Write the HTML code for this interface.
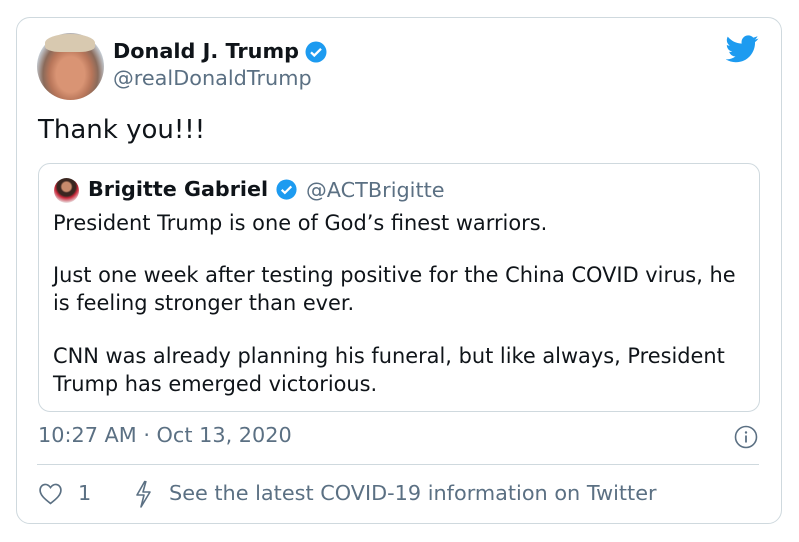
<!DOCTYPE html>
<html><head><meta charset="utf-8"><style>
html,body{margin:0;padding:0;background:#fff;width:799px;height:542px;overflow:hidden}
body{font-family:"DejaVu Sans","Liberation Sans",sans-serif;position:relative}
.a{position:absolute;white-space:nowrap;line-height:1}
.card{position:absolute;left:16px;top:17px;width:764px;height:505px;border:1px solid #cfd9de;border-radius:14px}
.q{position:absolute;left:38px;top:163px;width:720px;height:247px;border:1px solid #cfd9de;border-radius:12px}
.t{font-size:20.9px;color:#0f1419}
.g{color:#5b7083}
</style></head><body>
<div class="card"></div>
<div class="a" style="left:37px;top:33px;width:67px;height:67px;border-radius:50%;background:radial-gradient(ellipse at 50% 62%,#d99474 0 30%,#b8765a 45%,#8a6a5a 58%,#c9d3dc 75%,#e6edf3 100%)"></div>
<div class="a" style="left:45px;top:34px;width:50px;height:18px;border-radius:50% 50% 30% 30%;background:#d8c9b0"></div>
<div class="a" style="left:113px;top:41px;font-size:20.8px;font-weight:bold;color:#0f1419">Donald J. Trump</div>
<svg class="a" style="left:304px;top:40px" width="24" height="24" viewBox="0 0 24 24"><circle cx="12" cy="12" r="10.5" fill="#1d9bf0"/><path d="M7 12.3l3.3 3.2L17 8.8" stroke="#fff" stroke-width="2.3" fill="none"/></svg>
<div class="a g" style="left:113px;top:68px;font-size:20.8px">@realDonaldTrump</div>
<svg class="a" style="left:726px;top:35px" width="33" height="28" viewBox="0 0 24 20"><path fill="#1d9bf0" d="M23.6 2.4c-.9.4-1.8.6-2.8.8 1-.6 1.8-1.5 2.1-2.7-.9.6-2 1-3.1 1.2C18.9.7 17.6.1 16.2.1c-2.7 0-4.9 2.2-4.9 4.9 0 .4 0 .8.1 1.1C7.3 5.9 3.7 4 1.3 1 .9 1.7.6 2.6.6 3.5c0 1.7.9 3.2 2.2 4.1-.8 0-1.6-.2-2.2-.6v.1c0 2.4 1.7 4.4 3.9 4.8-.4.1-.8.2-1.3.2-.3 0-.6 0-.9-.1.6 2 2.4 3.4 4.6 3.4-1.7 1.3-3.8 2.1-6.1 2.1-.4 0-.8 0-1.2-.1 2.2 1.4 4.8 2.2 7.5 2.2 9.1 0 14-7.5 14-14v-.6c1-.7 1.8-1.6 2.5-2.6z"/></svg>
<div class="a" style="left:38px;top:117px;font-size:26px;color:#0f1419">Thank you!!!</div>
<div class="q"></div>
<div class="a" style="left:54px;top:178px;width:25px;height:25px;border-radius:50%;background:radial-gradient(circle at 50% 35%,#c88a6c 0 22%,#3a2620 30% 45%,#c8283a 55%,#eee 80%)"></div>
<div class="a" style="left:88px;top:179px;font-size:20.7px;font-weight:bold;color:#0f1419">Brigitte Gabriel</div>
<svg class="a" style="left:275px;top:178px" width="23" height="23" viewBox="0 0 24 24"><circle cx="12" cy="12" r="10.5" fill="#1d9bf0"/><path d="M7 12.3l3.3 3.2L17 8.8" stroke="#fff" stroke-width="2.3" fill="none"/></svg>
<div class="a g" style="left:306px;top:180px;font-size:20.8px">@ACTBrigitte</div>
<div class="a t" style="left:53px;top:213px">President Trump is one of God’s finest warriors.</div>
<div class="a t" style="left:53px;top:265px">Just one week after testing positive for the China COVID virus, he</div>
<div class="a t" style="left:53px;top:293px">is feeling stronger than ever.</div>
<div class="a t" style="left:53px;top:346px">CNN was already planning his funeral, but like always, President</div>
<div class="a t" style="left:53px;top:374px">Trump has emerged victorious.</div>
<div class="a g" style="left:38px;top:425px;font-size:20.8px">10:27 AM · Oct 13, 2020</div>
<svg class="a" style="left:734px;top:425px" width="24" height="24" viewBox="0 0 24 24"><circle cx="12" cy="12" r="10.5" stroke="#5b7083" stroke-width="1.6" fill="none"/><circle cx="12" cy="7.5" r="1.2" fill="#5b7083"/><path d="M12 10.5v7" stroke="#5b7083" stroke-width="1.8"/></svg>
<div class="a" style="left:37px;top:464px;width:722px;height:1px;background:#cfd9de"></div>
<svg class="a" style="left:38px;top:482px" width="25" height="23" viewBox="0 0 24 22"><path d="M12 20.5C6 16 2 12.3 2 7.6 2 4.6 4.3 2.3 7 2.3c2.2 0 3.8 1.3 5 3 1.2-1.7 2.8-3 5-3 2.7 0 5 2.3 5 5.3 0 4.7-4 8.4-10 12.9z" fill="none" stroke="#5b7083" stroke-width="1.6"/></svg>
<div class="a g" style="left:78px;top:483px;font-size:20.8px">1</div>
<svg class="a" style="left:133px;top:480px" width="20" height="28" viewBox="0 0 20 28"><path d="M12 1L4 15h7l-3 12 9-15h-7l3-11" fill="none" stroke="#5b7083" stroke-width="1.6" stroke-linejoin="round"/></svg>
<div class="a g" style="left:169px;top:483px;font-size:20.8px">See the latest COVID-19 information on Twitter</div>
</body></html>
